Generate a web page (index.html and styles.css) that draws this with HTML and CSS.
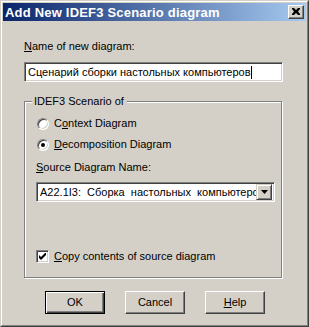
FILE: index.html
```html
<!DOCTYPE html>
<html>
<head>
<meta charset="utf-8">
<link rel="stylesheet" href="styles.css">
</head>
<body>
<div class="window">
  <div class="frame">
    <div class="titlebar">
      <span class="title">Add New IDEF3 Scenario diagram</span>
      <span class="close"><svg width="8" height="7" viewBox="0 0 8 7"><path d="M0 0h2l2 2 2-2h2v1L6 3.5 8 6v1H6L4 5 2 7H0V6l2-2.5L0 1z" fill="#000"/></svg></span>
    </div>
    <div class="content">
      <div class="label name-label"><u>N</u>ame of new diagram:</div>
      <div class="input"><span class="input-text">Сценарий сборки настольных компьютеров</span><span class="caret"></span></div>
      <div class="group">
        <div class="legend">IDEF3 Scenario of</div>
        <div class="radio-row first">
          <span class="radio"></span>
          <span class="label">C<u>o</u>ntext Diagram</span>
        </div>
        <div class="radio-row">
          <span class="radio checked"><span class="dot"></span></span>
          <span class="label"><u>D</u>ecomposition Diagram</span>
        </div>
        <div class="label source-label"><u>S</u>ource Diagram Name:</div>
        <div class="select">
          <span class="select-text">A22.1I3:  Сборка  настольных  компьютеро</span>
          <span class="drop"><svg width="7" height="4" viewBox="0 0 7 4"><path d="M0 0h7L3.5 4z" fill="#000"/></svg></span>
        </div>
        <div class="check-row">
          <span class="checkbox"><svg width="7" height="7" viewBox="0 0 7 7"><path d="M0 2v3l2 2 5-5V-1L2 4z" fill="#000"/></svg></span>
          <span class="label"><u>C</u>opy contents of source diagram</span>
        </div>
      </div>
      <div class="buttons">
        <div class="btn default"><span class="btn-inner">OK</span></div>
        <div class="btn"><span class="btn-inner">Cancel</span></div>
        <div class="btn"><span class="btn-inner"><u>H</u>elp</span></div>
      </div>
    </div>
  </div>
</div>
</body>
</html>
```
FILE: styles.css
```css
html, body {
  margin: 0;
  padding: 0;
  background: #d4d0c8;
}
body {
  width: 309px;
  height: 327px;
  overflow: hidden;
  font-family: "Liberation Sans", Arial, sans-serif;
  font-size: 11px;
  color: #000;
}
.window {
  box-sizing: border-box;
  width: 309px;
  height: 327px;
  border: 1px solid;
  border-color: #d4d0c8 #404040 #404040 #d4d0c8;
  background: #d4d0c8;
}
.frame {
  box-sizing: border-box;
  height: 100%;
  border: 1px solid;
  border-color: #fff #808080 #808080 #fff;
  padding: 1px;
}
.titlebar {
  height: 18px;
  background: linear-gradient(to right, #0a246a, #a6caf0);
  display: flex;
  align-items: center;
  justify-content: space-between;
  padding: 0 2px 0 2px;
}
.title {
  color: #fff;
  font-weight: bold;
  font-size: 13px;
  letter-spacing: 0.2px;
}
.close {
  box-sizing: border-box;
  width: 16px;
  height: 14px;
  background: #d4d0c8;
  border: 1px solid;
  border-color: #fff #404040 #404040 #fff;
  box-shadow: inset -1px -1px 0 #808080;
  display: flex;
  align-items: center;
  justify-content: center;
  padding: 0 1px 1px 0;
}
.close svg { display: block; }
.content {
  padding: 0 0 0 21px;
}
.label {
  line-height: 13px;
  white-space: nowrap;
}
.name-label {
  margin-top: 19px;
}
.input {
  box-sizing: border-box;
  width: 259px;
  height: 20px;
  margin-top: 9px;
  background: #fff;
  border: 1px solid;
  border-color: #808080 #fff #fff #808080;
  box-shadow: inset 1px 1px 0 #404040, inset -1px -1px 0 #d4d0c8;
  display: flex;
  align-items: center;
  padding-left: 3px;
  overflow: hidden;
  white-space: nowrap;
}
.caret {
  display: inline-block;
  width: 1px;
  height: 13px;
  background: #000;
}
.group {
  box-sizing: border-box;
  width: 258px;
  height: 177px;
  margin-top: 19px;
  border: 1px solid #808080;
  box-shadow: 1px 1px 0 #fff, inset 1px 1px 0 #fff;
  padding: 0 0 0 11px;
}
.legend {
  display: inline-block;
  margin-top: -7px;
  margin-left: -4px;
  padding: 0 3px 0 2px;
  background: #d4d0c8;
  line-height: 13px;
  vertical-align: top;
}
.radio-row {
  display: flex;
  align-items: center;
  gap: 5px;
  height: 13px;
  margin-top: 3px;
  margin-left: 1px;
}
.radio-row + .radio-row {
  margin-top: 8px;
}
.radio {
  box-sizing: border-box;
  width: 12px;
  height: 12px;
  border-radius: 50%;
  background: #fff;
  border: 1px solid;
  border-color: #808080 #fff #fff #808080;
  box-shadow: inset 1px 1px 0 #404040, inset -1px -1px 0 #d4d0c8;
  display: flex;
  align-items: center;
  justify-content: center;
}
.dot {
  width: 4px;
  height: 4px;
  border-radius: 50%;
  background: #000;
}
.source-label {
  margin-top: 10px;
}
.select {
  box-sizing: border-box;
  width: 239px;
  height: 20px;
  margin-top: 8px;
  background: #fff;
  border: 1px solid;
  border-color: #808080 #fff #fff #808080;
  box-shadow: inset 1px 1px 0 #404040, inset -1px -1px 0 #d4d0c8;
  display: flex;
  align-items: center;
  padding: 2px 2px 2px 2px;
  overflow: hidden;
}
.select-text {
  flex: 1;
  min-width: 0;
  overflow: hidden;
  white-space: pre;
  padding-left: 1px;
}
.drop {
  box-sizing: border-box;
  flex: none;
  width: 16px;
  height: 16px;
  background: #d4d0c8;
  border: 1px solid;
  border-color: #d4d0c8 #404040 #404040 #d4d0c8;
  box-shadow: inset 1px 1px 0 #fff, inset -1px -1px 0 #808080;
  display: flex;
  align-items: center;
  justify-content: center;
}
.drop svg { display: block; }
.check-row {
  display: flex;
  align-items: center;
  gap: 5px;
  margin-top: 48px;
}
.checkbox {
  box-sizing: border-box;
  width: 13px;
  height: 13px;
  background: #fff;
  border: 1px solid;
  border-color: #808080 #fff #fff #808080;
  box-shadow: inset 1px 1px 0 #404040, inset -1px -1px 0 #d4d0c8;
  display: flex;
  align-items: center;
  justify-content: center;
}
.checkbox svg { display: block; }
.buttons {
  display: flex;
  gap: 20px;
  margin-top: 13px;
  margin-left: 21px;
}
.btn {
  box-sizing: border-box;
  width: 60px;
  height: 23px;
  border: 1px solid;
  border-color: #fff #404040 #404040 #fff;
  box-shadow: inset -1px -1px 0 #808080;
  display: flex;
  align-items: center;
  justify-content: center;
}
.btn.default {
  border: 1px solid #000;
  box-shadow: inset 1px 1px 0 #fff, inset -1px -1px 0 #404040, inset -2px -2px 0 #808080;
}
.btn-inner {
  line-height: 13px;
}
u { text-decoration-thickness: 1px; text-underline-offset: 1px; }
```
